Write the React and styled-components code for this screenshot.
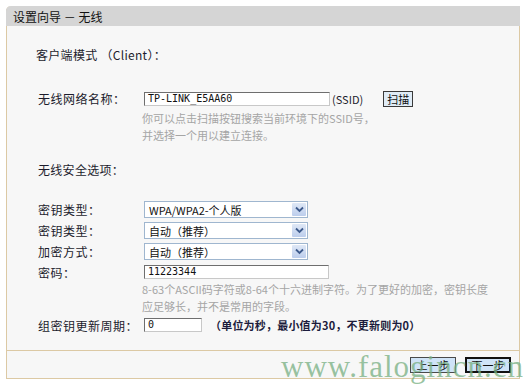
import styled, { createGlobalStyle } from "styled-components";

const GlobalStyle = createGlobalStyle`
  html, body {
    margin: 0;
    padding: 0;
    background: #ffffff;
  }
  body {
    font-family: "Noto Sans CJK SC", "DejaVu Sans", sans-serif;
    font-size: 12px;
    color: #1c1c2c;
  }
`;

const Page = styled.div`
  position: relative;
  width: 525px;
  height: 385px;
  padding: 6px 5px 7px 6px;
  box-sizing: border-box;
`;

const Panel = styled.div`
  display: flex;
  flex-direction: column;
  height: 100%;
  border: 1px solid #dcc9a4;
  border-top: none;
  border-radius: 5px 0 0 0;
  background: #f7f7f7;
`;

const PanelHeader = styled.div`
  height: 20px;
  display: flex;
  align-items: center;
  padding-left: 7px;
  background: #d5d5d5;
  border-radius: 5px 0 0 0;
  font-size: 12px;
  color: #111;
  margin: 0 -1px;
`;

const PanelBody = styled.div`
  flex: 1;
  padding: 20px 0 0 29px;
  border-bottom: 1px solid #dcc9a4;
`;

const SectionTitle = styled.div`
  height: 18px;
  line-height: 18px;
  margin-top: ${(p) => p.$top || 0}px;
  margin-bottom: ${(p) => p.$gap || 0}px;
  padding-left: ${(p) => p.$indent || 0}px;
  letter-spacing: 0.3px;
`;

const Row = styled.div`
  display: grid;
  grid-template-columns: 106px auto;
  align-items: center;
  min-height: ${(p) => p.$h || 21}px;
  padding-left: 2px;
`;

const Label = styled.span`
  letter-spacing: 0.5px;
`;

const Field = styled.div`
  display: flex;
  align-items: center;
  gap: 2px;
`;

const TextBox = styled.div`
  width: ${(p) => p.$w}px;
  height: 14px;
  box-sizing: border-box;
  padding-left: 3px;
  border: 1px solid #6e6e6e;
  border-right-color: #c8c8c8;
  border-bottom-color: #c8c8c8;
  background: #fff;
  font-family: "DejaVu Sans Mono", "Liberation Mono", monospace;
  font-size: 10px;
  line-height: 12px;
  color: #111;
`;

const Select = styled.div`
  width: 164px;
  height: 17px;
  box-sizing: border-box;
  display: flex;
  align-items: center;
  justify-content: space-between;
  padding: 0 1px 0 4px;
  border: 1px solid #9fb6cf;
  background: #fff;
  font-size: 11px;
  color: #111;
`;

const Arrow = styled.span`
  width: 14px;
  height: 13px;
  display: flex;
  align-items: center;
  justify-content: center;
  background: linear-gradient(#dfe8f6, #bccdec);
  border-radius: 1px;
`;

const Hint = styled.div`
  padding-left: 106px;
  margin: ${(p) => p.$m || "3px 0 0"};
  font-size: 11px;
  line-height: 17px;
  color: #a5a5a5;
`;

const SmallButton = styled.span`
  display: inline-flex;
  align-items: center;
  justify-content: center;
  height: 14px;
  padding: 0 3px;
  border: 1px solid #3a3a3a;
  background: #e0ecf6;
  font-size: 11px;
  color: #111;
`;

const Unit = styled.span`
  font-size: 11px;
`;

const Spacer = styled.span`
  width: 16px;
`;

const Note = styled.span`
  margin-left: 6px;
  font-size: 11px;
  font-weight: 600;
  color: #1c1c3c;
  letter-spacing: 0.2px;
`;

const Footer = styled.div`
  height: 27px;
  display: flex;
  align-items: center;
  justify-content: flex-end;
  gap: 9px;
  padding-right: 8px;
`;

const NavButton = styled.span`
  width: 46px;
  height: 16px;
  display: flex;
  align-items: center;
  justify-content: center;
  box-sizing: border-box;
  border: ${(p) => (p.$active ? "2px solid #111" : "1px solid #4a4a4a")};
  background: #cfe3f7;
  font-size: 11px;
  color: #111;
`;

const Watermark = styled.div`
  position: absolute;
  left: 281px;
  top: 349px;
  font-family: "Liberation Serif", "DejaVu Serif", serif;
  font-size: 31px;
  letter-spacing: 1px;
  color: rgba(120, 175, 130, 0.75);
  pointer-events: none;
  white-space: nowrap;
`;

const ChevronDown = () => (
  <svg width="9" height="7" viewBox="0 0 9 7">
    <path d="M1 1.5 L4.5 5 L8 1.5" fill="none" stroke="#3d5a8c" strokeWidth="1.8" />
  </svg>
);

const SelectBox = ({ children }) => (
  <Select>
    <span>{children}</span>
    <Arrow>
      <ChevronDown />
    </Arrow>
  </Select>
);

const App = () => (
  <>
    <GlobalStyle />
    <Page>
      <Panel>
        <PanelHeader>设置向导 － 无线</PanelHeader>
        <PanelBody>
          <SectionTitle $gap={26}>客户端模式 （Client）：</SectionTitle>

          <Row $h={17}>
            <Label>无线网络名称：</Label>
            <Field>
              <TextBox $w={186}>TP-LINK_E5AA60</TextBox>
              <Unit>(SSID)</Unit>
              <Spacer />
              <SmallButton>扫描</SmallButton>
            </Field>
          </Row>
          <Hint>
            你可以点击扫描按钮搜索当前环境下的SSID号，
            <br />
            并选择一个用以建立连接。
          </Hint>

          <SectionTitle $top={17} $gap={20} $indent={2}>
            无线安全选项：
          </SectionTitle>

          <Row>
            <Label>密钥类型：</Label>
            <SelectBox>WPA/WPA2-个人版</SelectBox>
          </Row>
          <Row>
            <Label>密钥类型：</Label>
            <SelectBox>自动（推荐）</SelectBox>
          </Row>
          <Row>
            <Label>加密方式：</Label>
            <SelectBox>自动（推荐）</SelectBox>
          </Row>
          <Row $h={20}>
            <Label>密码：</Label>
            <TextBox $w={185}>11223344</TextBox>
          </Row>
          <Hint $m="-1px 0 0">
            8-63个ASCII码字符或8-64个十六进制字符。为了更好的加密，密钥长度
            <br />
            应足够长，并不是常用的字段。
          </Hint>
          <Row $h={20}>
            <Label>组密钥更新周期：</Label>
            <Field>
              <TextBox $w={58}>0</TextBox>
              <Note>（单位为秒，最小值为30，不更新则为0）</Note>
            </Field>
          </Row>
        </PanelBody>
        <Footer>
          <NavButton>上一步</NavButton>
          <NavButton $active>下一步</NavButton>
        </Footer>
      </Panel>
      <Watermark>www.falogincn.cn</Watermark>
    </Page>
  </>
);

export default App;
